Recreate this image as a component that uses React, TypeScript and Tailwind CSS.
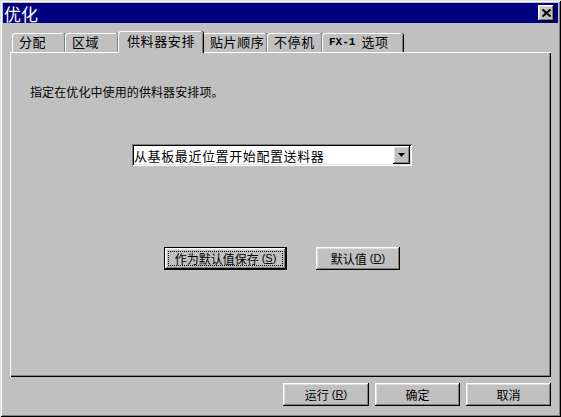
import React from "react";

const raised =
  "shadow-[inset_-1px_-1px_#000,inset_1px_1px_#fff,inset_-2px_-2px_#808080,inset_2px_2px_#dfdfdf]";

function Tab({ label, w, active }: { label: React.ReactNode; w: string; active?: boolean }) {
  if (active) {
    return (
      <div
        className={`${w} h-[22px] -mb-px relative z-10 bg-[#c0c0c0] rounded-t-[3px] border-t border-l border-white shadow-[inset_-1px_0_#808080,1px_0_#000] flex items-start justify-center pt-[2px] text-[13px] tracking-[0.6px]`}
      >
        {label}
      </div>
    );
  }
  return (
    <div
      className={`${w} h-[19px] bg-[#c0c0c0] rounded-t-[3px] border-t border-l border-white shadow-[inset_-1px_0_#808080,1px_0_#000] flex items-start pl-[6px] pt-[1px] text-[13px] tracking-[0.6px]`}
    >
      {label}
    </div>
  );
}

function Btn({ children, w, def }: { children: React.ReactNode; w: string; def?: boolean }) {
  if (def) {
    return (
      <div className={`${w} h-[23px] border border-black bg-[#c0c0c0] flex`}>
        <div className={`flex-1 ${raised} flex items-center justify-center p-[3px]`}>
          <div className="w-full h-full border border-dotted border-black flex items-center justify-center text-[12px]">
            {children}
          </div>
        </div>
      </div>
    );
  }
  return (
    <div className={`${w} h-[23px] bg-[#c0c0c0] ${raised} flex items-center justify-center text-[12px]`}>
      {children}
    </div>
  );
}

const M = ({ c }: { c: string }) => (
  <span className="font-['Liberation_Sans',sans-serif] text-[11px] ml-[3px]">
    (<span className="underline">{c}</span>)
  </span>
);

export default function App() {
  return (
    <div className="w-[561px] h-[417px] bg-[#c0c0c0] shadow-[inset_1px_1px_#dfdfdf,inset_-1px_-1px_#000,inset_2px_2px_#fff,inset_-2px_-2px_#808080] p-[3px] flex flex-col text-black font-['Noto_Sans_CJK_SC','Liberation_Sans',sans-serif] leading-none select-none">
      {/* title bar */}
      <div className="h-[20px] bg-[#000080] flex items-center justify-between pl-[1px] pr-[4px] shrink-0">
        <span className="text-white text-[17px] leading-none">优化</span>
        <div className={`w-[16px] h-[16px] bg-[#c0c0c0] ${raised} flex items-center justify-center`}>
          <svg width="9" height="8" viewBox="0 0 9 8">
            <path d="M0.5 0.5 L8.5 7.5 M8.5 0.5 L0.5 7.5" stroke="#000" strokeWidth="2" />
          </svg>
        </div>
      </div>

      <div className="px-[7px] pt-[8px]">
        {/* tabs */}
        <div className="h-[21px] flex items-end pl-[2px]">
          <Tab label="分配" w="w-[53px]" />
          <Tab label="区域" w="w-[53px]" />
          <Tab label="供料器安排" w="w-[85px]" active />
          <Tab label="贴片顺序" w="w-[64px]" />
          <Tab label="不停机" w="w-[55px]" />
          <Tab
            label={
              <span className="flex items-center">
                <span className="font-['Liberation_Mono',monospace] font-bold text-[11px] tracking-normal mt-[1px]">FX-1</span>
                <span className="ml-[6px]">选项</span>
              </span>
            }
            w="w-[81px]"
          />
        </div>

        {/* panel */}
        <div className="w-[541px] h-[325px] bg-[#c0c0c0] shadow-[inset_1px_1px_#fff,inset_-1px_-1px_#000,inset_-2px_-2px_#808080] pt-[32px] pl-[20px] flex flex-col">
          <div className="text-[12px] leading-[16px] tracking-[0.1px]">指定在优化中使用的供料器安排项。</div>

          <div className="ml-[102px] mt-[44px] w-[280px] h-[22px] bg-white shadow-[inset_1px_1px_#808080,inset_-1px_-1px_#fff,inset_2px_2px_#000,inset_-2px_-2px_#dfdfdf] flex items-center pl-[2px] pr-[2px]">
            <span className="flex-1 text-[13px] tracking-[0.6px] pt-[1px]">从基板最近位置开始配置送料器</span>
            <div className={`w-[17px] h-[18px] bg-[#c0c0c0] ${raised} flex items-center justify-center`}>
              <svg width="7" height="4" viewBox="0 0 7 4">
                <path d="M0 0 H7 L3.5 4 Z" fill="#000" />
              </svg>
            </div>
          </div>

          <div className="flex ml-[134px] mt-[81px] gap-[29px]">
            <Btn w="w-[123px]" def>
              作为默认值保存<M c="S" />
            </Btn>
            <Btn w="w-[84px]">
              默认值<M c="D" />
            </Btn>
          </div>
        </div>
      </div>

      {/* bottom buttons */}
      <div className="flex justify-end gap-[6px] mt-[6px] pr-[7px]">
        <Btn w="w-[86px]">
          运行<M c="R" />
        </Btn>
        <Btn w="w-[85px]">确定</Btn>
        <Btn w="w-[85px]">取消</Btn>
      </div>
    </div>
  );
}
